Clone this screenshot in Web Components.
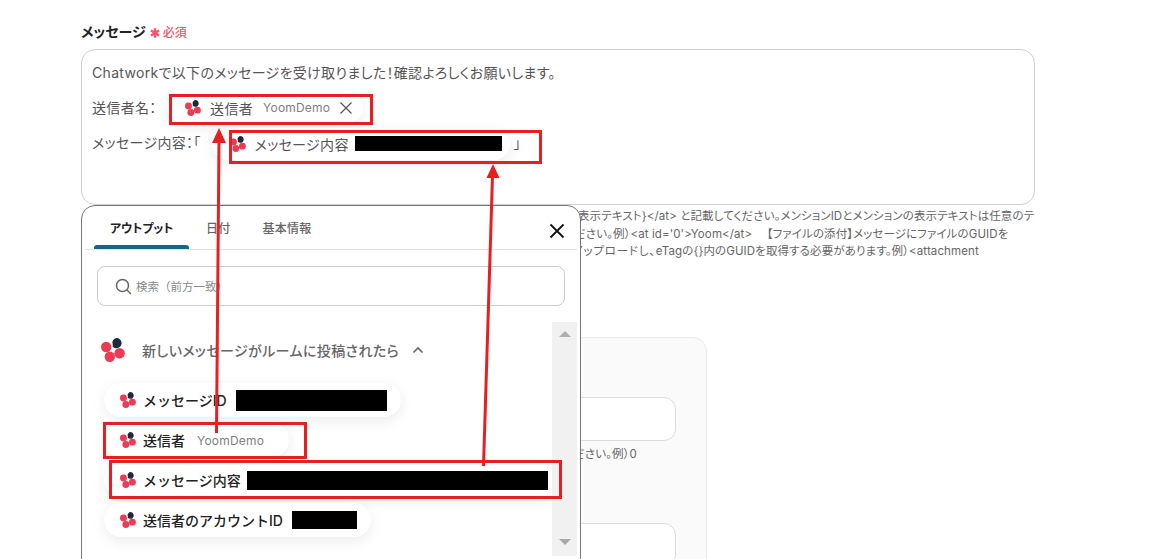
<!DOCTYPE html>
<html lang="ja"><head><meta charset="utf-8"><title>メッセージ</title>
<style>
html,body{margin:0;height:559px;overflow:hidden;background:#fff}
body{font-family:Inter,"Noto Sans CJK JP",sans-serif;font-size:14px;color:#555;font-feature-settings:"palt"}
</style></head>
<body>
<x-app>
  <x-field>
    <x-line><span>Chatworkで以下のメッセージを受け取りました！確認よろしくお願いします。</span></x-line>
    <x-line><span>送信者名：</span><x-chip variant="input" style="margin:2px 0 0 10.500px;width:196px">送信者<x-sub>YoomDemo</x-sub><x-close></x-close></x-chip></x-line>
    <x-line><span>メッセージ内容：「</span><x-chip variant="input2" style="margin:4px 0 0 11px">メッセージ内容<x-redact w="147" h="15" style="margin-left:6px"></x-redact></x-chip><span style="margin-left:4px">」</span></x-line>
  </x-field>
  <x-help pad="497" style="margin-top:3px">表示テキスト}&lt;/at&gt; と記載してください。メンションIDとメンションの表示テキストは任意のテ</x-help>
  <x-help pad="493">ださい。例）&lt;at id='0'&gt;Yoom&lt;/at&gt;<span style="letter-spacing:3px">　</span>【ファイルの添付】メッセージにファイルのGUIDを</x-help>
  <x-help pad="491"><span style="letter-spacing:.8px">アップロードし、</span>eTagの{}内のGUIDを取得する必要があります。例）&lt;attachment</x-help>
  <x-card>
    <x-input></x-input>
    <x-help pad="434" style="margin:5px 0 60px;width:auto">ください。例）0</x-help>
    <x-input></x-input>
  </x-card>
</x-app>
<x-popover>
  <x-tab active>アウトプット</x-tab>
  <x-tab style="margin-left:1px">日付</x-tab>
  <x-tab>基本情報</x-tab>
  <x-search slot="search">検索（前方一致）</x-search>
  <x-group slot="list">新しいメッセージがルームに投稿されたら</x-group>
  <x-chip slot="list">メッセージID<x-redact w="151" h="21" style="margin-left:9px"></x-redact></x-chip>
  <x-chip slot="list" style="width:185px">送信者<x-sub style="margin-left:12px">YoomDemo</x-sub></x-chip>
  <x-chip slot="list">メッセージ内容<x-redact w="301" h="19" style="margin-left:6px"></x-redact></x-chip>
  <x-chip slot="list">送信者のアカウントID<x-redact w="65" h="18" style="margin-left:9px"></x-redact></x-chip>
</x-popover>
<x-annotations></x-annotations>
<script>
function def(name, css, html, extra){
  customElements.define(name, class extends HTMLElement{
    constructor(){super();this.attachShadow({mode:'open'}).innerHTML='<style>'+css+'</style>'+html;}
    connectedCallback(){ if(extra) extra.call(this); }
  });
}
const logo=`<svg viewBox="0 0 24 24" width="100%" height="100%" aria-hidden="true"><path fill="#1b2a41" d="M15.400 0c2.900 0 5.200 2.300 5.200 5.100 0 2.900-2.300 5.200-5.200 5.200-1.400 0-2.800-.6-3.700-1.500.2-2-.1-3.500-.4-4.700C12.200 2 13.400 .2 15.400 0z"/><g fill="#ee3a52"><circle cx="5.200" cy="9" r="5.200"/><circle cx="18.600" cy="15.200" r="5.200"/><circle cx="8.800" cy="18.800" r="5.200"/></g></svg>`;

def('x-app',`:host{display:block;width:954px;margin-left:81px;padding-top:21px}
.label{display:flex;align-items:center;height:20px;margin-bottom:8px;font-weight:600;color:#222;font-size:14px}
.star{width:10px;height:10px;margin:4px 0 0 4px;display:block;flex:none}
.req{color:#ff4f6b;font-size:12px;font-weight:500;margin-left:3px}`,
`<div class="label"><span>メッセージ</span><svg class="star" viewBox="0 0 10 10" aria-hidden="true"><path d="M5 .2v9.600M.9 2.600l8.200 4.800M9.100 2.600L.9 7.400" stroke="#ff4f6b" stroke-width="2.300" fill="none"/></svg><span class="req">必須</span></div><slot></slot>`);

def('x-field',`:host{display:block;box-sizing:border-box;height:156px;border:1px solid #cdd0d5;border-radius:14px;padding:4px 10px}`,`<slot></slot>`);
def('x-line',`:host{display:flex;align-items:center;height:35px;letter-spacing:.32px;white-space:nowrap;color:#555}`,`<slot></slot>`);

def('x-logo',`:host{display:block;width:16px;height:16px;flex:none}`,logo);

def('x-chip',`:host{display:inline-flex;align-items:center;box-sizing:border-box;height:34px;width:max-content;padding:0 14px 0 16px;border-radius:17px;background:#fff;box-shadow:0 4px 14px rgba(0,0,0,.08);font-weight:500;color:#222;font-size:14px;white-space:nowrap;flex:none;font-feature-settings:normal}
:host([variant]){font-weight:400;color:#555;height:30px;border-radius:15px;font-feature-settings:"palt"}
:host([variant=input]){padding-left:18px;height:30px}
:host([variant=input2]){padding-left:18px;padding-right:8px;height:32px;border-radius:16px}
x-logo{margin-right:7px}
:host([variant=input]) x-logo{margin-right:9px}
:host([variant=input2]) x-logo{margin-right:9px}`,
`<x-logo></x-logo><slot></slot>`);

def('x-sub',`:host{display:inline;margin-left:10px;font-size:12px;font-weight:400;color:#808080;letter-spacing:.2px}`,`<slot></slot>`);
def('x-close',`:host{display:block;width:12px;height:12px;margin-left:10px}svg{display:block}`,
`<svg width="12" height="12" viewBox="0 0 12 12" aria-hidden="true"><path d="M.5.5l11 11M11.500.5l-11 11" stroke="#555" stroke-width="1.200" fill="none"/></svg>`);
def('x-redact',`:host{display:inline-block;background:#000;flex:none;vertical-align:middle}`,``,function(){
  this.style.width=this.getAttribute('w')+'px';this.style.height=this.getAttribute('h')+'px';});

def('x-help',`:host{display:block;box-sizing:border-box;height:17.500px;line-height:17.500px;font-size:11.500px;color:#666;letter-spacing:.11px;white-space:nowrap}`,`<slot></slot>`,function(){
  this.style.paddingLeft=this.getAttribute('pad')+'px';});

def('x-card',`:host{display:block;box-sizing:border-box;width:607px;height:240px;margin:76px 0 0 19px;padding:59px 30px 0 30px;background:#fafafa;border:1px solid #e8e9ec;border-radius:14px}`,`<slot></slot>`);
def('x-input',`:host{display:block;height:44px;box-sizing:border-box;background:#fff;border:1px solid #d9dce1;border-radius:12px}`,``);

def('x-tab',`:host{display:block;box-sizing:border-box;height:43px;line-height:45px;padding:0 16px;font-size:12px;font-weight:500;color:#666;position:relative;letter-spacing:.25px;white-space:nowrap}
:host([active]){color:#222;font-weight:600;letter-spacing:-.1px;width:95px}
:host([active])::after{content:"";position:absolute;left:0;right:0;bottom:0;height:4px;background:#0f6a85;border-radius:3px 3px 0 0}`,`<slot></slot>`);

def('x-popover',`:host{position:absolute;left:81px;top:205px;width:500px;height:400px;box-sizing:border-box;background:#fff;border:1px solid #777;border-radius:14px;display:flex;flex-direction:column}
.tabs{display:flex;align-items:flex-end;height:43px;margin:0 3px;padding-left:9px;border-bottom:1px solid #e3e3e3;position:relative}
.x{position:absolute;right:12px;top:17px;width:16px;height:16px}
.search{padding:16px 15px}
.body{display:flex;height:234px;margin-right:3px}
.list{flex:1;min-width:0;padding:16px 0 0 22px;display:flex;flex-direction:column;align-items:flex-start;gap:6px}
.bar{width:25px;background:#f1f1f1;position:relative;flex:none}
.bar i{position:absolute;left:7px;width:0;height:0;border-left:6px solid transparent;border-right:6px solid transparent}
.up{top:9px;border-bottom:6px solid #b0b0b0}
.down{bottom:11px;border-top:6px solid #a8a8a8}`,
`<div class="tabs"><slot></slot><svg class="x" viewBox="0 0 16 16" aria-hidden="true"><path d="M1.500 1.500l13 13M14.500 1.500l-13 13" stroke="#111" stroke-width="1.800" fill="none"/></svg></div>
<div class="search"><slot name="search"></slot></div>
<div class="body"><div class="list"><slot name="list"></slot></div><div class="bar"><i class="up"></i><i class="down"></i></div></div>`);

def('x-search',`:host{display:flex;align-items:center;box-sizing:border-box;height:40px;border:1px solid #ccc;border-radius:8px;padding-left:17px;font-size:11.500px;color:#8a8a8a;white-space:nowrap;font-feature-settings:normal}
svg{margin-right:4px;flex:none}`,
`<svg width="17" height="17" viewBox="0 0 17 17" aria-hidden="true"><circle cx="7.500" cy="7.500" r="6" fill="none" stroke="#666" stroke-width="1.500"/><path d="M12 12l4 4" stroke="#666" stroke-width="1.500"/></svg><slot></slot>`);

def('x-group',`:host{display:flex;align-items:center;height:24px;margin:0 0 15px -3px;font-size:14px;letter-spacing:.4px;font-weight:500;color:#666;white-space:nowrap}
x-logo{width:24px;height:24px;margin-right:17px}
svg{margin-left:13px}`,
`<x-logo></x-logo><slot></slot><svg width="12" height="8" viewBox="0 0 12 8" aria-hidden="true"><path d="M1.500 6.500L6 2l4.500 4.500" fill="none" stroke="#666" stroke-width="1.600"/></svg>`);

def('x-annotations',`:host{position:absolute;left:0;top:0;width:1153px;height:559px;pointer-events:none}svg{display:block}`,
`<svg width="1153" height="559" viewBox="0 0 1153 559" aria-hidden="true">
<g fill="none" stroke="#e81f1f" stroke-width="3">
<rect x="170.500" y="95.500" width="201" height="28"/>
<rect x="230.500" y="131.500" width="310" height="31"/>
<rect x="104.500" y="423.500" width="201" height="34"/>
<rect x="110.500" y="461.500" width="450" height="36"/>
<path d="M216.500 433L219 142M483.500 466L492.500 176"/>
</g>
<path fill="#e81f1f" d="M219 128l7 15h-14zM493 164l6.500 14h-13z"/>
</svg>`);
</script>
</body></html>
